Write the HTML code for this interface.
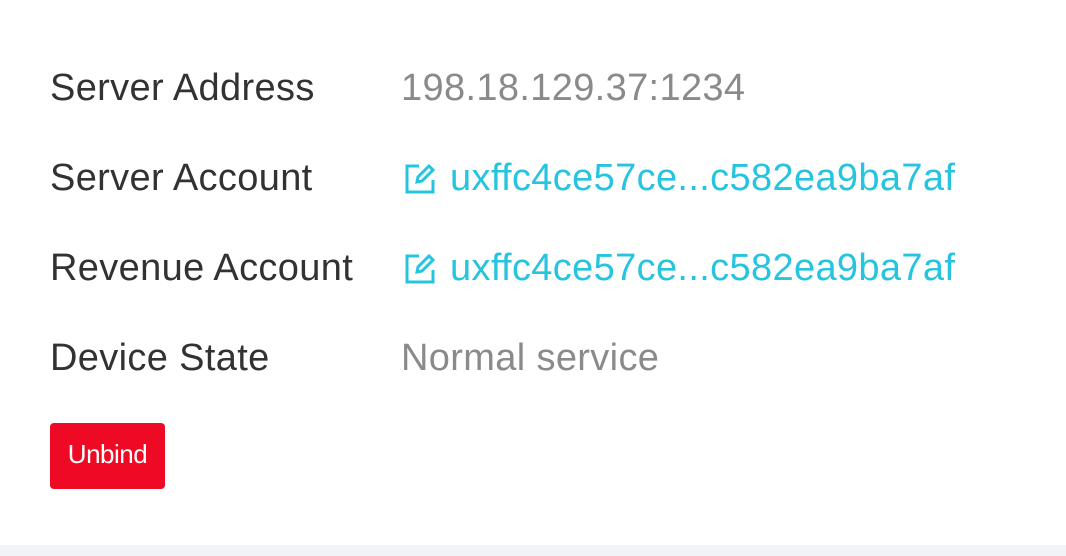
<!DOCTYPE html>
<html><head><style>
body{margin:0;width:1066px;height:556px;background:#fff;font-family:"Liberation Sans",Arial,sans-serif;position:relative;overflow:hidden}
.r{position:absolute;left:0;height:44px;line-height:44px;font-size:38px;white-space:nowrap;letter-spacing:0.35px}
.l{position:absolute;left:50px;color:#323233}
.v{position:absolute;left:401px;color:#8a8a8c}
.k{position:absolute;left:404px;color:#26c4df}
.k svg{position:absolute;left:0;top:7px}
.k span{position:absolute;left:46px}
.btn{position:absolute;left:50px;top:423px;width:115px;height:66px;background:#ee0a24;border-radius:4px;color:#fff;font-size:26px;text-align:center;line-height:62px;letter-spacing:-0.5px}
.bot{position:absolute;left:0;top:545px;width:1066px;height:11px;background:#f2f3f7}
</style></head><body>
<div class="r" style="top:66px"><span class="l">Server Address</span><span class="v">198.18.129.37:1234</span></div>
<div class="r" style="top:156px"><span class="l">Server Account</span><span class="k"><svg width="32" height="32" viewBox="0 0 32 32" fill="none" stroke="#26c4df" stroke-width="3"><path d="M15 3H3v26h26V17"/><path d="M13 19l1-5L25 3l4 4-11 11z"/></svg><span>uxffc4ce57ce...c582ea9ba7af</span></span></div>
<div class="r" style="top:246px"><span class="l">Revenue Account</span><span class="k"><svg width="32" height="32" viewBox="0 0 32 32" fill="none" stroke="#26c4df" stroke-width="3"><path d="M15 3H3v26h26V17"/><path d="M13 19l1-5L25 3l4 4-11 11z"/></svg><span>uxffc4ce57ce...c582ea9ba7af</span></span></div>
<div class="r" style="top:336px"><span class="l">Device State</span><span class="v">Normal service</span></div>
<div class="btn">Unbind</div>
<div class="bot"></div>
</body></html>
